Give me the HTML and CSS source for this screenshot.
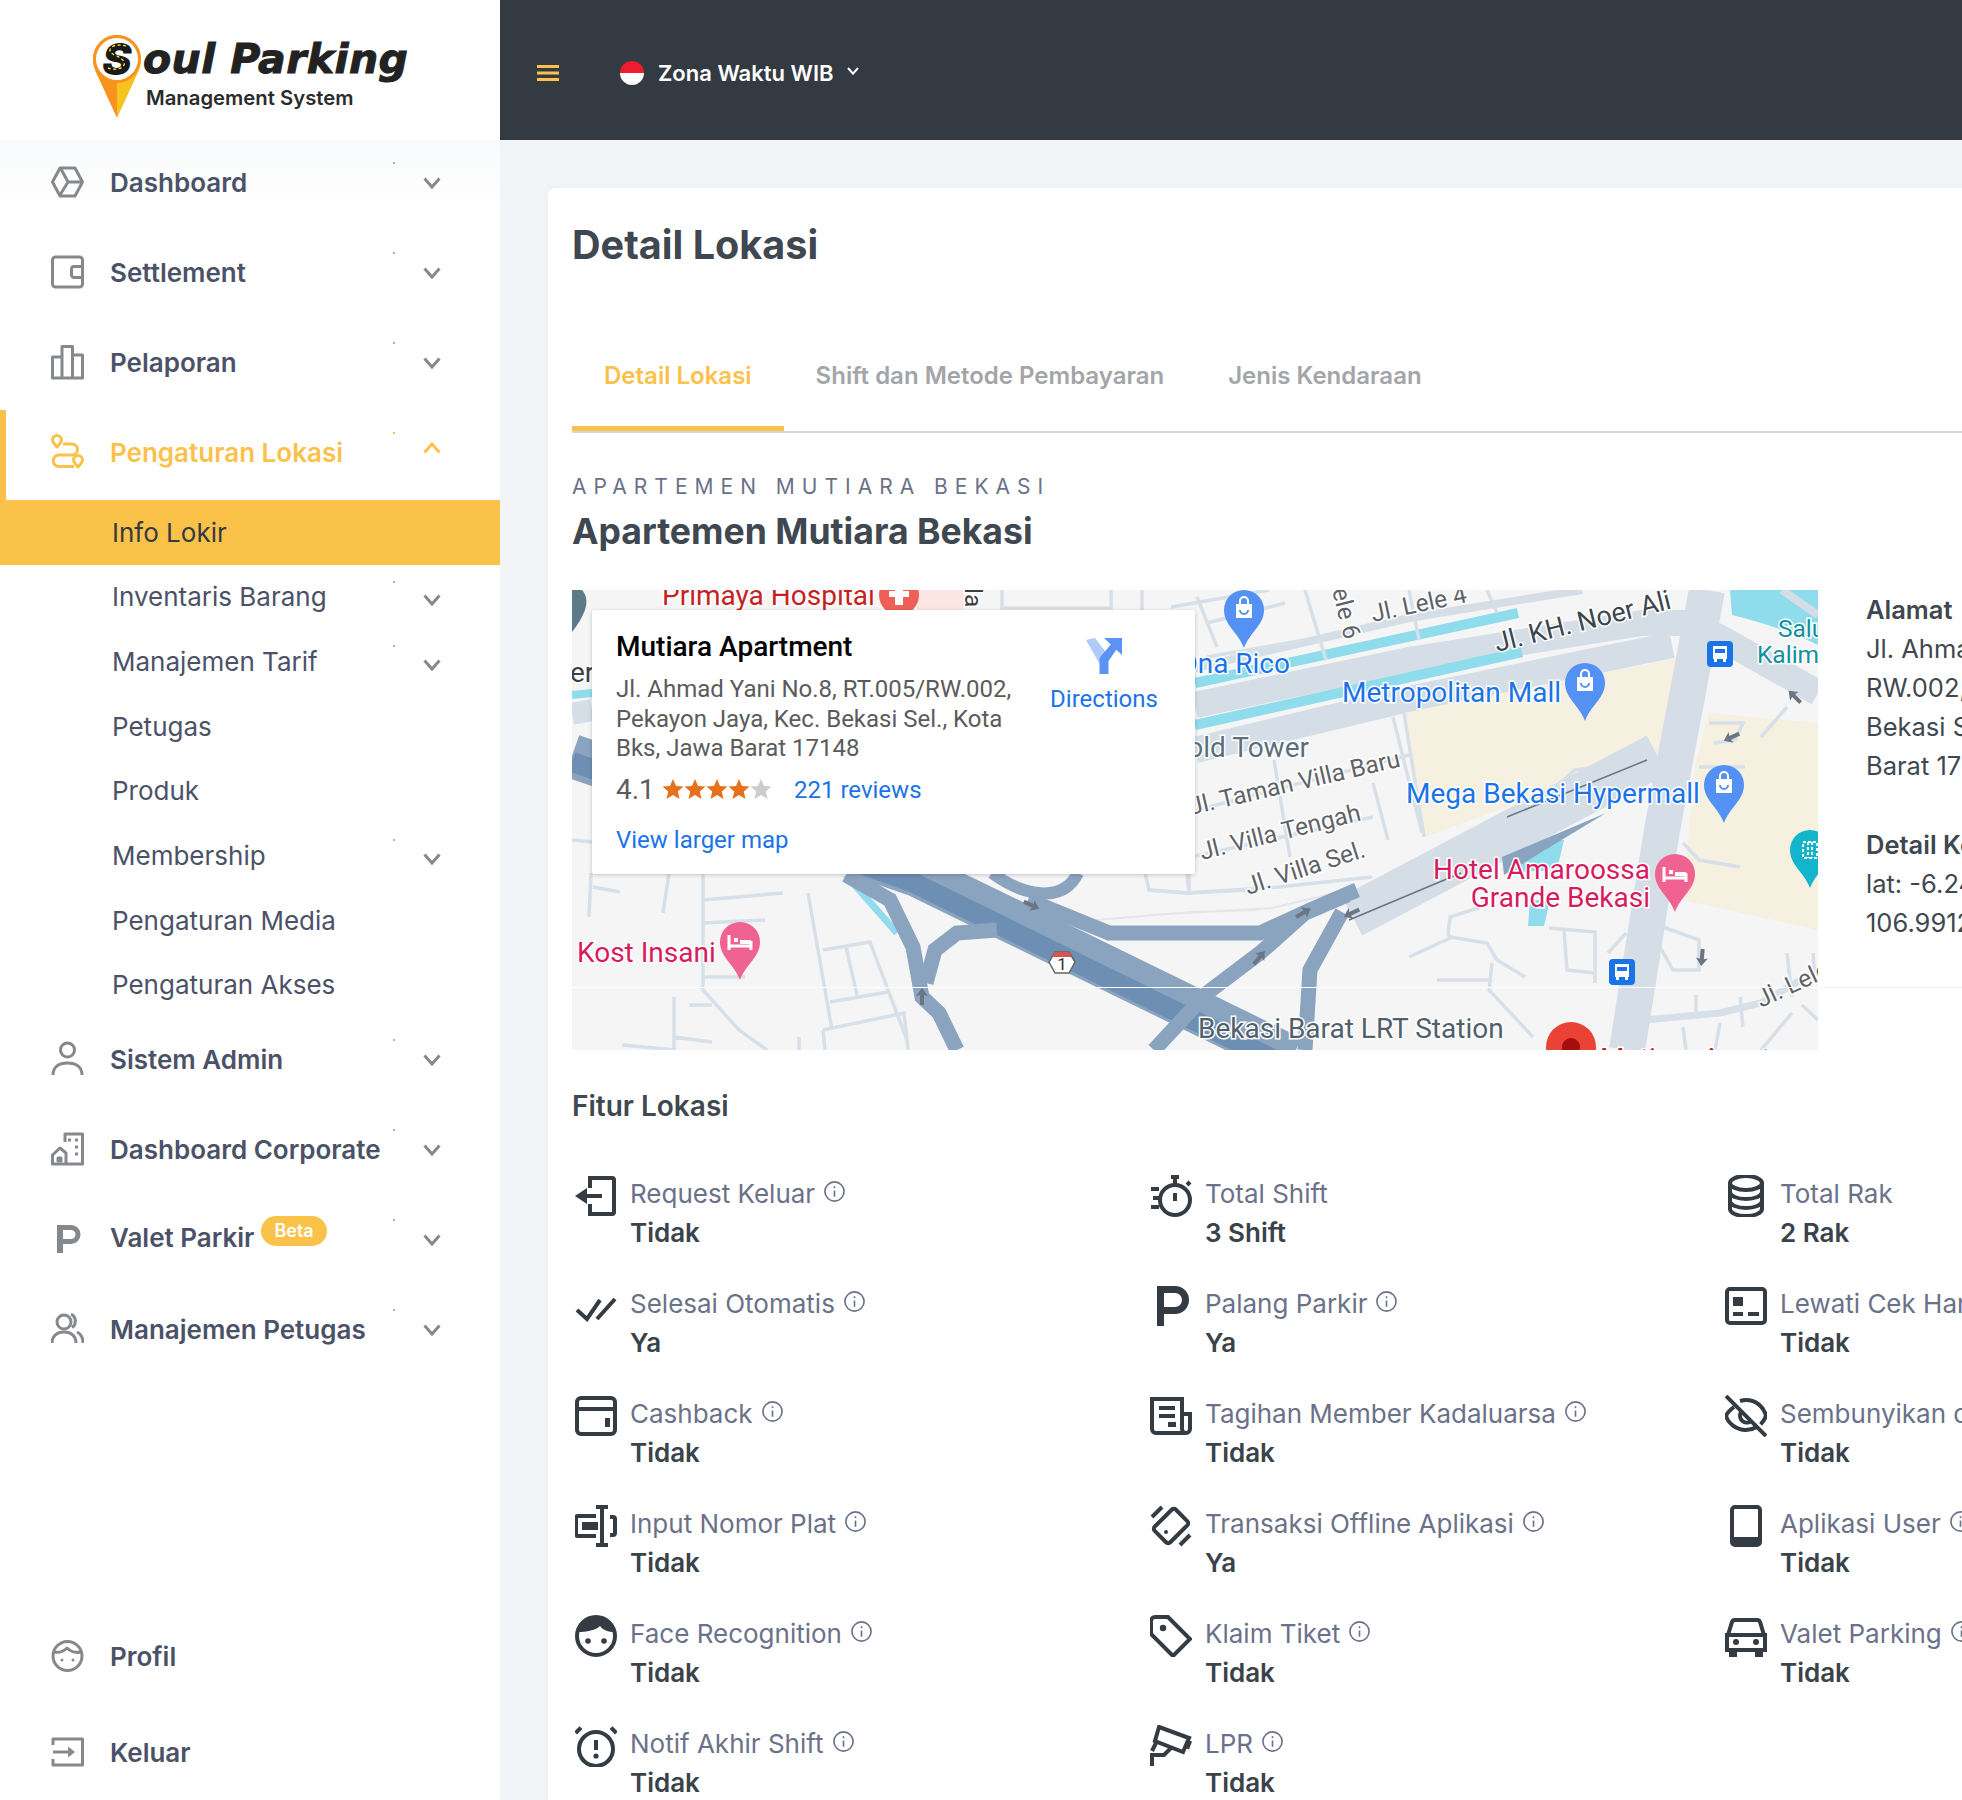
FILE: index.html
```html
<!doctype html>
<html lang="id">
<head>
    <meta charset="UTF-8">
    <title>Detail Lokasi</title>
    <link rel="stylesheet" href="styles.css">
</head>
<body>

<svg class="sprite" aria-hidden="true">
    <symbol id="i-chevron" viewBox="0 0 18 12"><path d="M1.500 1.500L9 10l7.500-8.500"/></symbol>
    <symbol id="i-info" viewBox="0 0 24 24"><circle cx="12" cy="12" r="10"/><path d="M12 11v6.500"/><path d="M12 6.500v2"/></symbol>
</svg>

<aside class="sidebar">
    <div class="logo">
        <svg class="logo-pin" viewBox="0 0 50 84">
            <path d="M25 1a24 24 0 0 1 24 24c0 8-3 13-7 22L25 84z" fill="#f8c320"/>
            <path d="M25 1A24 24 0 0 0 1 25c0 8 3 13 7 22l17 37z" fill="#f7931e"/>
            <path d="M25 1a24 24 0 0 1 24 24 24 24 0 0 1-24 24A24 24 0 0 1 1 25 24 24 0 0 1 25 1z" fill="#f7931e"/>
            <circle cx="25" cy="25" r="21" fill="#fff"/>
            <text x="25" y="41" class="logo-s">S</text>
            <path d="M34 12c-7-2-15-1-16 4s12 6 14 12-8 9-16 6" class="logo-dash"/>
        </svg>
        <div class="logo-text">
            <div class="logo-name">oul Parking</div>
            <div class="logo-sub">Management System</div>
        </div>
    </div>

    <nav class="menu">
        <a class="item has-sub">
            <svg class="nav-icon" viewBox="0 0 33 36"><path d="M9 4h15l7.500 14L24 32H9L1.500 18z"/><path d="M10 5l7 13h14M17 18L9 31"/></svg>
            <span>Dashboard</span>
            <svg class="chev"><use href="#i-chevron"/></svg>
        </a>
        <a class="item has-sub">
            <svg class="nav-icon" viewBox="0 0 33 36"><rect x="1.500" y="3" width="30" height="30" rx="3"/><path d="M31 12.500H23a2.500 2.500 0 0 0-2.500 2.500v6a2.500 2.500 0 0 0 2.500 2.500h8"/></svg>
            <span>Settlement</span>
            <svg class="chev"><use href="#i-chevron"/></svg>
        </a>
        <a class="item has-sub">
            <svg class="nav-icon" viewBox="0 0 33 36"><path d="M1.500 13h9.500v21H1.500zM11 2.500h10.500V34H11zM21.500 11h10v23h-10z"/></svg>
            <span>Pelaporan</span>
            <svg class="chev"><use href="#i-chevron"/></svg>
        </a>
        <a class="item has-sub active">
            <svg class="nav-icon" viewBox="0 0 33 36"><path d="M6 13C3 9.500 1.500 8 1.500 6a4.500 4.500 0 0 1 9 0c0 2-1.500 3.500-4.500 7z"/><path d="M12 10h9a5.500 5.500 0 0 1 0 11H8a5.500 5.500 0 0 0 0 11.500h15"/><path d="M27 33c-3-3.500-4.500-5-4.500-7a4.500 4.500 0 0 1 9 0c0 2-1.500 3.500-4.500 7z"/></svg>
            <span>Pengaturan Lokasi</span>
            <svg class="chev up"><use href="#i-chevron"/></svg>
        </a>

        <a class="sub current">Info Lokir</a>
        <a class="sub has-sub">Inventaris Barang<svg class="chev"><use href="#i-chevron"/></svg></a>
        <a class="sub has-sub">Manajemen Tarif<svg class="chev"><use href="#i-chevron"/></svg></a>
        <a class="sub">Petugas</a>
        <a class="sub">Produk</a>
        <a class="sub has-sub">Membership<svg class="chev"><use href="#i-chevron"/></svg></a>
        <a class="sub">Pengaturan Media</a>
        <a class="sub">Pengaturan Akses</a>

        <a class="item has-sub">
            <svg class="nav-icon" viewBox="0 0 33 36"><circle cx="16.500" cy="9" r="7"/><path d="M2 34c0-8 6-12 14.500-12S31 26 31 34"/></svg>
            <span>Sistem Admin</span>
            <svg class="chev"><use href="#i-chevron"/></svg>
        </a>
        <a class="item has-sub">
            <svg class="nav-icon" viewBox="0 0 33 36"><path d="M14 11V3h17.500v30H1.500v-9L9 17l6 5v11M17 9h3M24 9h3M24 16h3M24 23h3"/><path d="M7 27h3v3H7z"/></svg>
            <span>Dashboard Corporate</span>
            <svg class="chev"><use href="#i-chevron"/></svg>
        </a>
        <a class="item has-sub">
            <svg class="nav-icon filled" viewBox="0 0 33 36"><path fill-rule="evenodd" d="M6 4h14a9.500 9.500 0 0 1 0 19H12v9H6zM12 9v9h8a4.500 4.500 0 0 0 0-9z"/></svg>
            <span class="valet">Valet Parkir<em class="beta">Beta</em></span>
            <svg class="chev"><use href="#i-chevron"/></svg>
        </a>
        <a class="item has-sub">
            <svg class="nav-icon" viewBox="0 0 33 36"><circle cx="13" cy="11" r="7"/><path d="M1 32c0-7 5-11 12-11s12 4 12 11M20 3.500c5 1.500 6 10 1 13M26 21c4 2 6 6 6 11"/></svg>
            <span>Manajemen Petugas</span>
            <svg class="chev"><use href="#i-chevron"/></svg>
        </a>

        <div class="menu-bottom">
            <a class="item">
                <svg class="nav-icon" viewBox="0 0 33 36"><circle cx="16.500" cy="18" r="14.500"/><path d="M3 14c5 1 9 0 13-4 4 4 9 5 14 4"/><circle cx="11" cy="22" r="1.500" class="dot"/><circle cx="22" cy="22" r="1.500" class="dot"/></svg>
                <span>Profil</span>
            </a>
            <a class="item">
                <svg class="nav-icon" viewBox="0 0 33 36"><path d="M2 11V5h29.500v26H2v-6"/><path d="M2 18h17"/><path d="M17 12.500l7 5.500-7 5.500z" class="dot"/></svg>
                <span>Keluar</span>
            </a>
        </div>
    </nav>
</aside>

<main class="main">
    <header class="topbar">
        <svg class="burger" viewBox="0 0 22 16"><path d="M0 1.500h22M0 8h22M0 14.500h22"/></svg>
        <span class="flag"></span>
        <span class="zone">Zona Waktu WIB</span>
        <svg class="chev zone-chev"><use href="#i-chevron"/></svg>
    </header>

    <section class="card">
        <h1 class="page-title">Detail Lokasi</h1>

        <div class="tabs">
            <a class="tab on">Detail Lokasi</a>
            <a class="tab">Shift dan Metode Pembayaran</a>
            <a class="tab">Jenis Kendaraan</a>
        </div>

        <div class="eyebrow">APARTEMEN MUTIARA BEKASI</div>
        <h2 class="place">Apartemen Mutiara Bekasi</h2>

        <div class="map-row">
            <div class="map">
                <svg class="map-art" viewBox="0 0 1246 460" width="1246" height="460">
                    <defs>
                        <path id="pin" d="M0-20a20 20 0 0 1 20 20c0 15-14 22-20 38-6-16-20-23-20-38a20 20 0 0 1 20-20z"/>
                        <path id="arrow" d="M0-9l6 8-4-1v10h-4V-2l-4 1z"/>
                        <g id="bag"><path d="M-8-6H8V8H-8z" fill="#fff"/><path d="M-4-6v-3a4 4 0 0 1 8 0v3" fill="none" stroke="#fff" stroke-width="2"/><path d="M-4 0a4 4 0 0 0 8 0" fill="none" stroke="#5491f5" stroke-width="2"/></g>
                        <g id="bed"><path d="M-11-7v15M11-1V8M-11 4h22" stroke="#fff" stroke-width="3" fill="none"/><path d="M-6-4h4v4h-4zM0-2h11v4H0z" fill="#fff"/></g>
                        <g id="bus"><rect x="-13" y="-13" width="26" height="26" rx="4" fill="#1a73e8"/><path d="M-7-8H7v13H-7z" fill="#fff"/><path d="M-5-5H5v4H-5z" fill="#1a73e8"/><path d="M-6 5h3v3h-3zM3 5h3v3H3z" fill="#fff"/></g>
                    </defs>

                    <!-- water at the top right -->
                    <path d="M1158 0H1246V55C1210 38 1180 30 1160 25z" class="water"/>

                    <!-- main road with its two canals -->
                    <path class="road thin" d="M623 78L837 28 1010 0"/>
                    <path d="M623 93L946 23" class="canal"/>
                    <path class="road" d="M623 115L837 70 1070 33H1116L1147 47 1246 103" style="stroke-width:26"/>
                    <path d="M623 135L950 62" class="canal"/>
                    <path class="road" d="M623 160L832 110 1100 55" style="stroke-width:26"/>
                    <path class="canal" d="M0 105L20 103" style="stroke-width:8"/>
                    <path class="road" d="M0 124L20 120" style="stroke-width:22"/>

                    <!-- blocks -->
                    <path d="M832 123L1106 68 1088 163 852 247z" class="beige"/>
                    <path d="M1137 123L1246 133V340L1111 310 1122 180z" class="beige"/>
                    <path d="M274 285L325 343" class="canal thin"/>
                    <path d="M930 250H992L985 280 940 282z" class="water"/>
                    <path d="M958 310H978L972 336H956z" class="water"/>

                    <!-- small streets -->
                    <path class="street" d="M19 283L17 327M21 297L48 302M97 283L91 323M131 283V400L167 440 195 460M131 310L211 303M131 333L193 330M131 387H173M102 407V460M117 415H140M102 447L140 452M50 455L104 460M236 303L260 440M251 360L298 352 336 453M274 357L285 405M258 412L316 402M251 440L332 423 336 460M251 440L253 460M227 447V460M0 250L20 252"/>
                    <path class="street" d="M573 283L577 300 617 303 676 300M617 283V303M430 0V18H539V0M570 0V20M625 7L645 57M599 17L697 0M635 33L713 13M733 0L754 70M837 0L847 50M635 67L733 50M915 0L925 23"/>
                    <path class="street" d="M702 170L718 267M801 193L816 250M837 165L625 220M801 227L619 267M578 300L614 303 707 297 800 287M614 270L617 303M821 127L850 243M832 123L852 247"/>
                    <path class="street" d="M961 217L1003 180 1065 172M1137 133H1171L1163 150 1142 153M1215 117L1189 147M1127 177H1173M1111 253L1127 270 1168 277"/>
                    <path class="street" d="M977 338L1023 342V393M992 340L995 380 1023 383M1091 337L1127 350V380H1101L1088 357M1036 363L1054 343M909 317L878 327 876 343 878 348 837 367M878 347L915 353 925 370 953 387M920 373L917 400 961 447M865 390H920M1124 405V423M1168 407L1171 437M1215 363L1220 407M1241 363L1243 390M1111 437L1114 460M1148 433L1143 460M1220 423L1189 460M1230 415L1246 430"/>
                    <path class="street wide" d="M1073 430L1148 423 1189 413 1246 380"/>
                    <path class="street pale" d="M524 330L620 322 688 320M578 325L630 322 700 318 775 300"/>

                    <!-- cross roads -->
                    <path class="road" d="M1135 0L1090 240 1055 460"/>
                    <path class="road" d="M780 326L1085 165" style="stroke-width:44"/>
                    <path class="road thin" d="M1210 0L1246 25"/>
                    <path d="M930 267L1034 223 932 285z" class="toll-fill"/>

                    <!-- toll -->
                    <path class="toll big" d="M0 166L345 285 720 468"/>
                    <path class="toll-core" d="M0 172L340 292 715 476"/>
                    <path class="toll" d="M274 285L318 310 341 357 350 407 367 423 385 460"/>
                    <path class="toll" d="M425 340L385 343 363 360 354 393"/>
                    <path class="toll" d="M420 283C450 305 490 315 506 283" style="stroke-width:12"/>
                    <path class="toll" d="M456 310L537 343H688L738 320 785 300"/>
                    <path class="toll" d="M582 460L635 403 688 363 733 323 775 305"/>
                    <path class="toll" d="M733 460L738 380 770 322"/>
                    <path d="M889 283L777 330M935 227L1075 170" class="edge"/>

                    <!-- one way arrows -->
                    <use href="#arrow" class="arrow" transform="translate(1223 107) rotate(-45)"/>
                    <use href="#arrow" class="arrow" transform="translate(1160 147) rotate(-115)"/>
                    <use href="#arrow" class="arrow" transform="translate(731 323) rotate(60)"/>
                    <use href="#arrow" class="arrow" transform="translate(780 323) rotate(-115)"/>
                    <use href="#arrow" class="arrow" transform="translate(687 368) rotate(40)"/>
                    <use href="#arrow" class="arrow" transform="translate(1130 367) rotate(185)"/>
                    <use href="#arrow" class="arrow" transform="translate(459 315) rotate(115)"/>
                    <use href="#arrow" class="arrow" transform="translate(350 407)"/>

                    <!-- hospital -->
                    <rect x="345" y="0" width="47" height="20" fill="#fbe6e3"/>
                    <circle cx="327" cy="5" r="20" fill="#ee6055"/>
                    <path d="M323-5h8v6h6v6h-6v8h-8V7h-6V1h6z" fill="#fff"/>
                    <path d="M0 0H10C17 8 17 20 0 42z" fill="#5c7a88"/>

                    <!-- shield -->
                    <path d="M483 362h14l6 10-6 11h-14l-6-11z" fill="#fff" stroke="#666" stroke-width="1.500"/>
                    <path d="M483 362h14l3 5h-20z" fill="#d9534f"/>
                    <text x="490" y="380" class="shield">1</text>

                    <!-- pins -->
                    <use href="#pin" fill="#5491f5" transform="translate(672 20)"/>
                    <use href="#bag" transform="translate(672 20)"/>
                    <use href="#pin" fill="#5491f5" transform="translate(1013 93)"/>
                    <use href="#bag" transform="translate(1013 93)"/>
                    <use href="#pin" fill="#5491f5" transform="translate(1152 195)"/>
                    <use href="#bag" transform="translate(1152 195)"/>
                    <use href="#pin" fill="#f06292" transform="translate(168 352)"/>
                    <use href="#bed" transform="translate(168 352)"/>
                    <use href="#pin" fill="#f06292" transform="translate(1103 284)"/>
                    <use href="#bed" transform="translate(1103 284)"/>
                    <use href="#pin" fill="#12b5cb" transform="translate(1238 260)"/>
                    <path d="M1231 252h14v16h-14zM1236 252v16M1240 252v16" fill="none" stroke="#fff" stroke-width="2" stroke-dasharray="3 2"/>
                    <use href="#bus" transform="translate(1148 64)"/>
                    <use href="#bus" transform="translate(1050 382)"/>
                    <circle cx="999" cy="457" r="25" fill="#ea4335"/>
                    <circle cx="999" cy="457" r="9" fill="#a50e0e"/>

                    <!-- labels -->
                    <text x="90" y="15" class="lbl red">Primaya Hospital</text>
                    <text x="-2" y="92" class="lbl dark">er</text>
                    <text transform="translate(393 -2) rotate(90)" class="lbl small dark">la</text>
                    <text x="718" y="83" class="lbl blue" text-anchor="end">Ona Rico</text>
                    <text x="770" y="112" class="lbl blue">Metropolitan Mall</text>
                    <text x="834" y="213" class="lbl blue">Mega Bekasi Hypermall</text>
                    <text x="1078" y="289" class="lbl pink" text-anchor="end">Hotel Amaroossa</text>
                    <text x="1078" y="317" class="lbl pink" text-anchor="end">Grande Bekasi</text>
                    <text x="5" y="372" class="lbl pink">Kost Insani</text>
                    <text x="737" y="167" class="lbl slate" text-anchor="end">Gold Tower</text>
                    <text x="626" y="448" class="lbl slate lrt">Bekasi Barat LRT Station</text>
                    <text x="1206" y="47" class="lbl small teal">Salu</text>
                    <text x="1185" y="73" class="lbl small teal">Kalim</text>
                    <text x="1028" y="478" class="lbl red">Mutiara Apartment</text>
                    <text transform="translate(925 62) rotate(-14)" class="lbl road-name">Jl. KH. Noer Ali</text>
                    <text transform="translate(801 32) rotate(-12)" class="lbl small grey">Jl. Lele 4</text>
                    <text transform="translate(760 0) rotate(76)" class="lbl small grey">ele 6</text>
                    <text transform="translate(619 225) rotate(-13)" class="lbl small grey">Jl. Taman Villa Baru</text>
                    <text transform="translate(630 270) rotate(-14)" class="lbl small grey">Jl. Villa Tengah</text>
                    <text transform="translate(676 305) rotate(-18)" class="lbl small grey">Jl. Villa Sel.</text>
                    <text transform="translate(1189 418) rotate(-25)" class="lbl small grey">Jl. Lele</text>
                </svg>

                <div class="map-card">
                    <div class="map-card-body">
                        <div class="map-name">Mutiara Apartment</div>
                        <div class="map-address">Jl. Ahmad Yani No.8, RT.005/RW.002,<br>Pekayon Jaya, Kec. Bekasi Sel., Kota<br>Bks, Jawa Barat 17148</div>
                        <div class="map-rating">
                            <span class="score">4.1</span>
                            <svg class="stars" viewBox="0 0 110 22">
                                <path id="st" d="M11 1l3 7 7.500.6-5.700 5 1.700 7.400L11 17l-6.500 4 1.700-7.400-5.700-5L8 8z" fill="#e7711b"/>
                                <use href="#st" x="22"/><use href="#st" x="44"/><use href="#st" x="66"/>
                                <path d="M99 1l3 7 7.500.6-5.700 5 1.700 7.400L99 17l-6.500 4 1.700-7.400-5.700-5L96 8z" fill="#ccc"/>
                            </svg>
                            <a class="map-link reviews">221 reviews</a>
                        </div>
                        <a class="map-link larger">View larger map</a>
                    </div>
                    <a class="directions">
                        <svg class="dir-icon" viewBox="0 0 36 36"><path d="M0 2l9-2 13 17-9 8z" fill="#aecbfa"/><path d="M13.500 36V20L26 5l5.500 5-9 13v13z" fill="#5b93f5"/><path d="M18 0h18v17z" fill="#5b93f5"/></svg>
                        <span class="map-link">Directions</span>
                    </a>
                </div>
            </div>

            <div class="location-info">
                <div class="info-head">Alamat</div>
                <div class="info-text">Jl. Ahmad Yani No.8, RT.005/<br>RW.002, Pekayon Jaya, Kec.<br>Bekasi Selatan, Kota Bekasi, Jawa<br>Barat 17148</div>
                <div class="info-head second">Detail Koordinat</div>
                <div class="info-text">lat: -6.2485,<br>106.9912</div>
            </div>
        </div>

        <h3 class="feat-title">Fitur Lokasi</h3>

        <div class="features">
            <div class="feat">
                <svg class="feat-icon" viewBox="1.500 1.500 21 21"><path d="M9 8V3h11a1 1 0 0 1 1 1v16a1 1 0 0 1-1 1H9V16"/><path d="M15 12H6"/><path class="solid" d="M7.500 8v8L1.500 12z"/></svg>
                <div><div class="feat-label">Request Keluar<svg class="info"><use href="#i-info"/></svg></div><div class="feat-value">Tidak</div></div>
            </div>
            <div class="feat">
                <svg class="feat-icon" viewBox="1.500 1.500 21 21"><circle cx="14" cy="14" r="7.500"/><path d="M12 2.500h4M14 2.500v4M20 6.500l1.500-1.500M14 10.500v4M2 8.500h4M3 13h3M2 17.500h4"/></svg>
                <div><div class="feat-label">Total Shift</div><div class="feat-value">3 Shift</div></div>
            </div>
            <div class="feat">
                <svg class="feat-icon" viewBox="1.500 1.500 21 21"><ellipse cx="12" cy="5.500" rx="8" ry="3.500"/><path d="M4 5.500v13C4 20.500 7.600 22 12 22s8-1.500 8-3.500v-13M4 10c0 2 3.600 3.500 8 3.500s8-1.500 8-3.500M4 14.500c0 2 3.600 3.500 8 3.500s8-1.500 8-3.500"/></svg>
                <div><div class="feat-label">Total Rak</div><div class="feat-value">2 Rak</div></div>
            </div>

            <div class="feat">
                <svg class="feat-icon" viewBox="1.500 1.500 21 21"><path d="M2.500 14l5 4.500 6.500-9.500M12.500 18.500l9-10"/></svg>
                <div><div class="feat-label">Selesai Otomatis<svg class="info"><use href="#i-info"/></svg></div><div class="feat-value">Ya</div></div>
            </div>
            <div class="feat">
                <svg class="feat-icon" viewBox="1.500 1.500 21 21"><path class="solid" fill-rule="evenodd" d="M5 2h9a7 7 0 0 1 0 14H8.500v6H5zM8.500 5.500v7H14a3.500 3.500 0 0 0 0-7z"/></svg>
                <div><div class="feat-label">Palang Parkir<svg class="info"><use href="#i-info"/></svg></div><div class="feat-value">Ya</div></div>
            </div>
            <div class="feat">
                <svg class="feat-icon" viewBox="1.500 1.500 21 21"><rect x="2.500" y="3.500" width="19" height="17" rx="1.500"/><path class="solid" d="M5.500 7.500h5v4.500h-5z"/><path d="M5.500 16h5M13 16h5.500"/></svg>
                <div><div class="feat-label">Lewati Cek Harian<svg class="info"><use href="#i-info"/></svg></div><div class="feat-value">Tidak</div></div>
            </div>

            <div class="feat">
                <svg class="feat-icon" viewBox="1.500 1.500 21 21"><rect x="2.500" y="3" width="19" height="18" rx="2"/><path d="M2.500 8.500h19"/><path class="solid" d="M16.500 13h2.500v4.500h-2.500z"/></svg>
                <div><div class="feat-label">Cashback<svg class="info"><use href="#i-info"/></svg></div><div class="feat-value">Tidak</div></div>
            </div>
            <div class="feat">
                <svg class="feat-icon" viewBox="1.500 1.500 21 21"><path d="M5 20.500H4.500a2 2 0 0 1-2-2V3.500h15v15a2 2 0 0 0 4 0V11h-4M5 20.500h14M6 8h8M6 12h8"/><path class="solid" d="M10.500 15h4v2.500h-4z"/></svg>
                <div><div class="feat-label">Tagihan Member Kadaluarsa<svg class="info"><use href="#i-info"/></svg></div><div class="feat-value">Tidak</div></div>
            </div>
            <div class="feat">
                <svg class="feat-icon" viewBox="1.500 1.500 21 21"><path d="M2 2l20 20"/><path d="M6 7.500C4 9 2.500 10.500 2 12c1 3.500 5 7 10 7 2 0 3.800-.6 5.300-1.500M9 4.500C10 4.200 11 4 12 4c5 0 9 3.500 10 8-.5 1.500-1.500 3-2.700 4.200M9.500 10a3.500 3.500 0 0 0 4.800 4.800"/></svg>
                <div><div class="feat-label">Sembunyikan dari Aplikasi<svg class="info"><use href="#i-info"/></svg></div><div class="feat-value">Tidak</div></div>
            </div>

            <div class="feat">
                <svg class="feat-icon" viewBox="1.500 1.500 21 21"><path d="M12 7H3a1 1 0 0 0-1 1v8a1 1 0 0 0 1 1h9M15 2v20M12 2.500h6M12 21.500h6M19 7.500h1.500a1 1 0 0 1 1 1v7a1 1 0 0 1-1 1H19"/><path class="solid" d="M5 10h8v4H5z"/></svg>
                <div><div class="feat-label">Input Nomor Plat<svg class="info"><use href="#i-info"/></svg></div><div class="feat-value">Tidak</div></div>
            </div>
            <div class="feat">
                <svg class="feat-icon" viewBox="1.500 1.500 21 21"><rect x="6.500" y="4.500" width="11" height="15" rx="1.500" transform="rotate(45 12 12)"/><circle class="solid" cx="9.500" cy="15" r="1" stroke="none"/><path d="M2.500 7.500L7.500 2.500M16.500 21.500l5-5"/></svg>
                <div><div class="feat-label">Transaksi Offline Aplikasi<svg class="info"><use href="#i-info"/></svg></div><div class="feat-value">Ya</div></div>
            </div>
            <div class="feat">
                <svg class="feat-icon" viewBox="1.500 1.500 21 21"><rect x="5" y="2.500" width="14" height="19" rx="1.500"/><path class="solid" d="M5 17.500h14V22H5z"/></svg>
                <div><div class="feat-label">Aplikasi User<svg class="info"><use href="#i-info"/></svg></div><div class="feat-value">Tidak</div></div>
            </div>

            <div class="feat">
                <svg class="feat-icon" viewBox="1.500 1.500 21 21"><circle cx="12" cy="12" r="9.500"/><path class="solid" stroke="none" d="M2.500 10C4 5 7.500 2 12 2s8 3 9.500 8c-3.500 0-6-1-7.500-3-2 2-6.500 3-11.500 3z"/><circle class="solid" stroke="none" cx="8" cy="14.500" r="1.400"/><circle class="solid" stroke="none" cx="16" cy="14.500" r="1.400"/></svg>
                <div><div class="feat-label">Face Recognition<svg class="info"><use href="#i-info"/></svg></div><div class="feat-value">Tidak</div></div>
            </div>
            <div class="feat">
                <svg class="feat-icon" viewBox="1.500 1.500 21 21"><path d="M4 2.500h6.500l11 11-8.500 8.500-11-11V4.500a2 2 0 0 1 2-2z"/><circle class="solid" stroke="none" cx="8" cy="8" r="1.600"/></svg>
                <div><div class="feat-label">Klaim Tiket<svg class="info"><use href="#i-info"/></svg></div><div class="feat-value">Tidak</div></div>
            </div>
            <div class="feat">
                <svg class="feat-icon" viewBox="1.500 1.500 21 21"><path d="M3 11.500l2-6.500a1.500 1.500 0 0 1 1.500-1h11a1.500 1.500 0 0 1 1.500 1l2 6.500M2.500 11.500h19V19h-19zM4.500 19v2.500h2V19M17.500 19v2.500h2V19"/><circle class="solid" stroke="none" cx="7" cy="15" r="1.500"/><circle class="solid" stroke="none" cx="17" cy="15" r="1.500"/></svg>
                <div><div class="feat-label">Valet Parking<svg class="info"><use href="#i-info"/></svg></div><div class="feat-value">Tidak</div></div>
            </div>

            <div class="feat">
                <svg class="feat-icon" viewBox="1.500 1.500 21 21"><circle cx="12" cy="13.500" r="8.500"/><path d="M1.800 5.500l2.700-2.700M22.200 5.500l-2.700-2.700M12 9v5"/><circle class="solid" stroke="none" cx="12" cy="17" r="1.300"/></svg>
                <div><div class="feat-label">Notif Akhir Shift<svg class="info"><use href="#i-info"/></svg></div><div class="feat-value">Tidak</div></div>
            </div>
            <div class="feat">
                <svg class="feat-icon" viewBox="1.500 1.500 21 21"><path d="M6 2.500L21 8l-3 7-14-5.500zM2.500 22v-5.500h6l3.500-3.500"/><path class="solid" d="M20.500 9l2 .8-1.500 4-2-.8z"/><path d="M5 9.500l-2.500 5"/></svg>
                <div><div class="feat-label">LPR<svg class="info"><use href="#i-info"/></svg></div><div class="feat-value">Tidak</div></div>
            </div>
        </div>
    </section>
</main>

</body>
</html>
```

FILE: styles.css
```css
*{
    box-sizing: border-box;
}
html, body{
    margin: 0;
    height: 100%;
    overflow: hidden;
}
body{
    display: flex;
    background: #f3f4f8;
    font-family: Inter, "Liberation Sans", sans-serif;
    font-size: 26px;
    color: #3f4750;
}
.sprite{
    display: none;
}

/* sidebar */
.sidebar{
    width: 500px;
    flex: none;
    display: flex;
    flex-direction: column;
    background: #fff;
}
.logo{
    height: 140px;
    flex: none;
    display: flex;
    padding: 34px 0 0 92px;
}
.logo-pin{
    width: 50px;
    height: 84px;
    flex: none;
}
.logo-s{
    font-family: Inter, sans-serif;
    font-weight: 900;
    font-style: italic;
    font-size: 44px;
    text-anchor: middle;
    fill: #1a1a1a;
}
.logo-dash{
    fill: none;
    stroke: #f7e11e;
    stroke-width: 1.4;
    stroke-dasharray: 3 2.5;
}
.logo-text{
    margin-left: 1px;
}
.logo-name{
    font-family: "DejaVu Sans", sans-serif;
    font-size: 41px;
    font-weight: 700;
    font-style: italic;
    letter-spacing: .4px;
    line-height: 50px;
    color: #222;
    white-space: nowrap;
    -webkit-text-stroke: 1px #222;
}
.logo-sub{
    margin: 2px 0 0 3px;
    font-size: 20.300px;
    font-weight: 600;
    line-height: 24px;
    color: #2b2b2b;
    white-space: nowrap;
}
.menu{
    flex: 1;
    display: flex;
    flex-direction: column;
    background: linear-gradient(#f9fafb, #fff 70px);
}
.menu a{
    position: relative;
    display: flex;
    align-items: center;
    color: #4b5268;
}
.item{
    height: 90px;
    flex: none;
    padding: 0 59px 6px 51px;
    font-weight: 600;
    white-space: nowrap;
}
.nav-icon{
    width: 33px;
    height: 36px;
    flex: none;
    margin-right: 26px;
    fill: none;
    stroke: #85888c;
    stroke-width: 3;
    stroke-linejoin: round;
}
.nav-icon .dot, .nav-icon.filled{
    fill: #85888c;
    stroke: none;
}
.chev{
    width: 18px;
    height: 12px;
    flex: none;
    margin-left: auto;
    fill: none;
    stroke: #85888c;
    stroke-width: 3;
}
.item .chev{
    margin-top: 2px;
}
.chev.up{
    transform: rotate(180deg) translateY(5px);
}
.has-sub::after{
    content: "";
    position: absolute;
    left: 393px;
    top: 22px;
    width: 2px;
    height: 2px;
    background: #aeb1b8;
}
.menu .active{
    color: #fbc14a;
    box-shadow: inset 6px 0 0 #fbc14a;
}
.active .nav-icon, .active .chev{
    stroke: #fbc14a;
}
.active::after{
    background: #fbc14a;
}
.sub{
    height: 64.650px;
    flex: none;
    padding: 0 59px 0 112px;
}
.sub .chev{
    margin-top: 6px;
}
.sub.has-sub::after{
    top: 16px;
}
.menu .current{
    background: #fbc249;
    color: #343a42;
}
.beta{
    position: relative;
    top: -10px;
    display: inline-block;
    margin-left: 7px;
    padding: 0 13px;
    height: 30px;
    border-radius: 15px;
    background: #fbc249;
    color: #fff;
    font-size: 18px;
    font-style: normal;
    line-height: 29px;
}
.menu-bottom{
    margin-top: auto;
}
.menu-bottom .item{
    height: 96px;
    padding-bottom: 0;
}

/* top bar */
.main{
    flex: 1;
    min-width: 0;
    overflow: hidden;
}
.topbar{
    height: 140px;
    display: flex;
    align-items: center;
    padding: 5px 0 0 37px;
    background: #343a42;
}
.burger{
    width: 22px;
    height: 16px;
    fill: none;
    stroke: #fbc14a;
    stroke-width: 3;
    margin-right: 61px;
}
.flag{
    width: 24px;
    height: 24px;
    margin-right: 14px;
    border-radius: 50%;
    background: linear-gradient(#ed1c2e 50%, #fff 50%);
}
.zone{
    font-size: 22px;
    font-weight: 600;
    color: #fff;
}
.zone-chev{
    width: 12px;
    height: 8px;
    margin: -4px 0 0 13px;
    stroke: #fff;
    stroke-width: 3;
}

/* card */
.card{
    width: 1600px;
    height: 1700px;
    margin: 48px 0 0 48px;
    padding: 33px 24px;
    background: #fff;
    border-radius: 8px;
    box-shadow: 0 2px 12px rgba(60, 70, 90, .05);
}
.page-title{
    margin: 0;
    font-size: 39.600px;
    font-weight: 700;
    line-height: 48px;
    color: #3f4750;
}
.tabs{
    display: flex;
    margin-top: 50px;
    border-bottom: 2px solid #d5d6d9;
}
.tab{
    padding: 41px 32px 34px;
    line-height: 32px;
    font-size: 24px;
    font-weight: 600;
    color: #a3a5a8;
    border-bottom: 5px solid transparent;
}
.tab.on{
    color: #fbc14a;
    border-color: #fbc14a;
}
.eyebrow{
    margin-top: 40px;
    font-size: 21px;
    line-height: 28px;
    letter-spacing: 7px;
    color: #6b7189;
    white-space: nowrap;
}
.place{
    margin: 9px 0 0;
    font-size: 35.600px;
    font-weight: 700;
    line-height: 44px;
    color: #3f4750;
}

/* map */
.map-row{
    display: flex;
    gap: 48px;
    margin-top: 36px;
    white-space: nowrap;
}
.map{
    position: relative;
    width: 1246px;
    height: 460px;
    flex: none;
    overflow: hidden;
    background: #f5f5f5;
    font-family: Roboto, sans-serif;
}
.map::after{
    content: "";
    position: absolute;
    left: 0;
    right: 0;
    top: 397px;
    height: 1px;
    background: #fff;
}
.map-art{
    display: block;
}
.beige{
    fill: #f6f0e1;
}
.water{
    fill: #8fdcec;
}
.canal{
    fill: none;
    stroke: #8fdcec;
    stroke-width: 10;
}
.canal.thin{
    stroke-width: 7;
}
.street{
    fill: none;
    stroke: #d7e0e8;
    stroke-width: 3.5;
}
.street.wide{
    stroke-width: 7;
}
.street.pale{
    stroke: #e4e6ea;
    stroke-width: 2;
}
.road{
    fill: none;
    stroke: #d5dee6;
    stroke-width: 36;
}
.road.thin{
    stroke-width: 8;
}
.toll{
    fill: none;
    stroke: #8aa3bf;
    stroke-width: 15;
}
.toll.big{
    stroke-width: 44;
}
.toll-core{
    fill: none;
    stroke: #6d8fb3;
    stroke-width: 20;
}
.toll-fill{
    fill: #8aa3bf;
}
.edge{
    fill: none;
    stroke: #6b7480;
    stroke-width: 1.5;
}
.arrow{
    fill: #6a7684;
}
.shield{
    font-family: Roboto, sans-serif;
    font-size: 17px;
    text-anchor: middle;
    fill: #333;
}
.lbl{
    font-family: Roboto, sans-serif;
    font-size: 28px;
    paint-order: stroke;
    stroke: #fff;
    stroke-width: 3px;
}
.lbl.small{
    font-size: 24.500px;
}
.red{ fill: #c5221f; }
.blue{ fill: #1a73e8; }
.pink{ fill: #d81b60; }
.teal{ fill: #12909f; }
.slate{ fill: #5a6f7e; }
.grey{ fill: #5f6368; }
.dark{ fill: #3c4043; }
.lbl.road-name{ fill: #3c4650; font-size: 27px; }
.lrt{ fill: #50606c; }

.map-card{
    position: absolute;
    z-index: 1;
    left: 20px;
    top: 20px;
    width: 603px;
    height: 264px;
    display: flex;
    padding: 20px 37px 0 24px;
    background: #fff;
    border-radius: 2px;
    box-shadow: 0 1px 4px rgba(0, 0, 0, .2);
}
.map-card-body{
    flex: 1;
}
.map-name{
    font-size: 28px;
    font-weight: 500;
    line-height: 34px;
    color: #000;
}
.map-address{
    margin-top: 11px;
    font-size: 24px;
    line-height: 29.500px;
    color: #5b5b5b;
}
.map-rating{
    display: flex;
    align-items: center;
    margin-top: 6px;
    height: 40px;
}
.score{
    width: 46px;
    font-size: 28px;
    color: #5b5b5b;
}
.stars{
    width: 110px;
    height: 22px;
    margin-top: -2px;
}
.map-link{
    font-size: 24px;
    color: #1a73e8;
}
.reviews{
    margin-left: 22px;
}
.larger{
    display: block;
    margin-top: 16px;
}
.directions{
    width: 108px;
    flex: none;
    display: flex;
    flex-direction: column;
    align-items: center;
    padding-top: 8px;
}
.dir-icon{
    width: 36px;
    height: 36px;
    margin-bottom: 11px;
}

.location-info{
    position: relative;
    width: 400px;
    flex: none;
    font-size: 25.500px;
    line-height: 39px;
}
.location-info::after{
    content: "";
    position: absolute;
    left: -48px;
    right: 0;
    top: 397px;
    height: 1px;
    background: #f2f3f5;
}
.info-head{
    font-weight: 600;
    color: #3f4750;
}
.info-head.second{
    margin-top: 40px;
}

/* features */
.feat-title{
    margin: 39px 0 0;
    font-size: 28px;
    font-weight: 600;
    line-height: 34px;
    color: #3f4750;
}
.features{
    display: grid;
    grid-template-columns: repeat(3, 575px);
    row-gap: 32px;
    margin-top: 51px;
    white-space: nowrap;
}
.feat{
    display: flex;
    padding-left: 3px;
}
.feat-icon{
    width: 42px;
    height: 42px;
    flex: none;
    margin: 1px 13px 0 0;
    fill: none;
    stroke: #343b43;
    stroke-width: 2;
}
.feat-icon .solid{
    fill: #343b43;
    stroke: none;
}
.feat-label{
    display: flex;
    align-items: center;
    height: 39px;
    color: #6b7189;
}
.info{
    width: 23px;
    height: 23px;
    flex: none;
    margin: -5px 0 0 8px;
    fill: none;
    stroke: #6b7189;
    stroke-width: 1.7;
}
.feat-value{
    height: 39px;
    line-height: 39px;
    font-weight: 600;
    color: #3a424a;
}
```
